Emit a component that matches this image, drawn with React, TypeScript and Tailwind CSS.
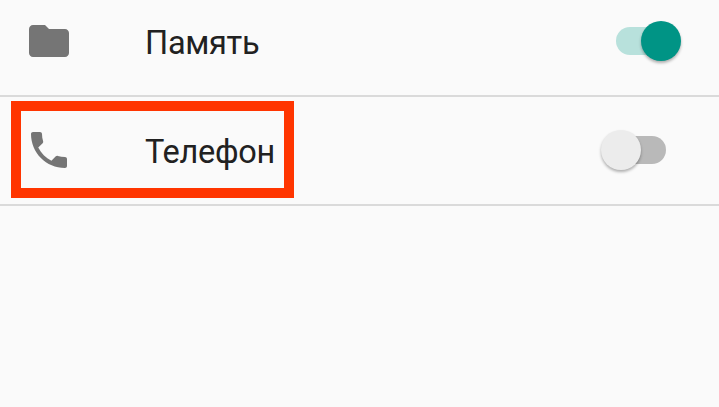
import { useState } from "react"

type Permission = {
  id: string
  label: string
  icon: string
  highlighted?: boolean
}

const PERMISSIONS: Permission[] = [
  {
    id: "storage",
    label: "Память",
    icon: "M10 4H4c-1.1 0-1.99.9-1.99 2L2 18c0 1.1.9 2 2 2h16c1.1 0 2-.9 2-2V8c0-1.1-.9-2-2-2h-8l-2-2z",
  },
  {
    id: "phone",
    label: "Телефон",
    icon: "M6.62 10.79c1.44 2.83 3.76 5.14 6.59 6.59l2.2-2.2c.27-.27.67-.36 1.02-.24 1.12.37 2.33.57 3.57.57.55 0 1 .45 1 1V20c0 .55-.45 1-1 1-9.39 0-17-7.61-17-17 0-.55.45-1 1-1h3.5c.55 0 1 .45 1 1 0 1.25.2 2.45.57 3.57.11.35.03.74-.25 1.02l-2.2 2.2z",
    highlighted: true,
  },
]

function Toggle({ on, label, onClick }: { on: boolean; label: string; onClick: () => void }) {
  return (
    <button
      role="switch"
      aria-checked={on}
      aria-label={label}
      onClick={onClick}
      className="relative flex h-10 w-20 items-center px-[15px]"
    >
      <span className={`h-7 w-full rounded-full ${on ? "bg-[#b8e1dc]" : "bg-[#b9b9b9]"}`} />
      <span
        className={`absolute top-0 size-10 rounded-full shadow-[0_2px_3px_rgba(0,0,0,0.3)] ${
          on ? "right-0 bg-[#009485]" : "left-0 bg-[#ececec]"
        }`}
      />
    </button>
  )
}

export default function App() {
  const [enabled, setEnabled] = useState<Record<string, boolean>>({ storage: true, phone: false })

  const toggle = (id: string) => {
    setEnabled((prev) => ({ ...prev, [id]: !prev[id] }))
  }

  return (
    <div className="h-screen overflow-hidden bg-[#fafafa] font-['Roboto',sans-serif] text-[#212121]">
      {/* The list is scrolled a little, so the first row is cut at the top */}
      <div className="-mt-3">
        {PERMISSIONS.map((p) => (
          <div
            key={p.id}
            className="relative flex h-[109px] items-center border-b-2 border-[#dadada] pr-[38px] pb-px pl-[25px]"
          >
            <svg className="size-12 shrink-0 text-[#757575]" viewBox="0 0 24 24" fill="currentColor">
              <path d={p.icon} />
            </svg>
            <span className="ml-[72px] flex-1 pt-1 text-[32.5px] leading-10 tracking-[-0.3px]">{p.label}</span>
            <Toggle on={enabled[p.id]} label={p.label} onClick={() => toggle(p.id)} />
            {p.highlighted && (
              <div className="pointer-events-none absolute top-1 left-[11px] h-[97px] w-[283px] border-10 border-[#ff3500]" />
            )}
          </div>
        ))}
      </div>
    </div>
  )
}
